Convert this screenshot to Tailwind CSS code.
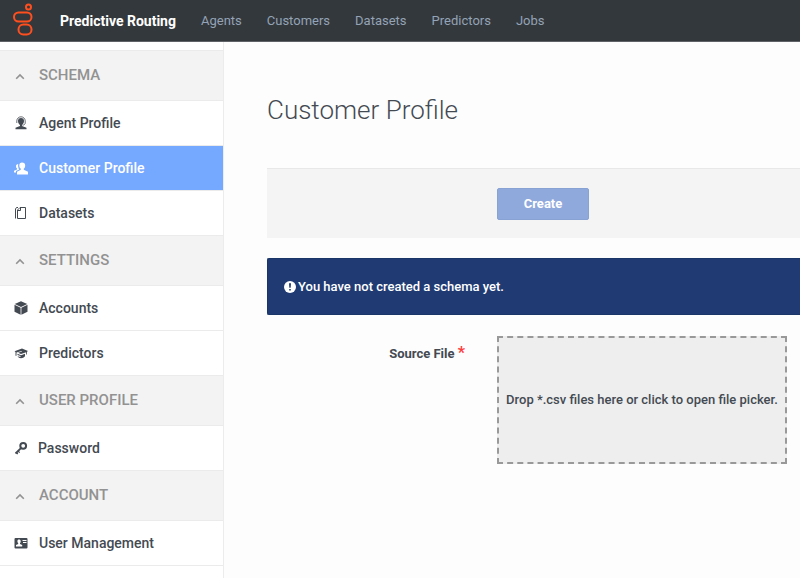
<!DOCTYPE html>
<html lang="en">
<head>
<meta charset="UTF-8" />
<meta name="viewport" content="width=device-width, initial-scale=1.0"/>
<title>Customer Profile - Predictive Routing</title>
<script src="https://cdn.jsdelivr.net/npm/@tailwindcss/browser@4"></script>
</head>
<body class="min-h-screen flex flex-col overflow-x-hidden bg-[#fdfdfd] text-[#444a52] font-['Roboto',sans-serif]">

<!-- Top bar -->
<header class="h-[42px] shrink-0 flex items-center bg-[#33383d] border-b border-[#5f6367]">
  <a href="#" class="w-[60px] pl-3" aria-label="Home">
    <svg class="w-6 h-9" viewBox="0 0 24 36" fill="none" stroke="#ff4f1f" stroke-width="2">
      <circle cx="16.500" cy="4" r="2.500"/>
      <rect x="2" y="9.500" width="17.500" height="9" rx="4.500"/>
      <rect x="6.500" y="21.500" width="13" height="10" rx="4.800"/>
    </svg>
  </a>
  <a href="#" class="text-sm font-bold text-white">Predictive Routing</a>
  <nav class="ml-[25px] flex gap-[25px] text-[13px] text-[#94a3b5]">
    <a href="#">Agents</a>
    <a href="#">Customers</a>
    <a href="#">Datasets</a>
    <a href="#">Predictors</a>
    <a href="#">Jobs</a>
  </nav>
</header>

<div class="flex flex-1">
  <!-- Sidebar -->
  <aside class="w-[224px] shrink-0 pt-2 bg-white border-r border-[#ececec] text-sm font-medium">
    <button class="w-full h-[51px] px-[15px] flex items-center gap-[14px] bg-[#f3f3f3] border-y border-[#ebebeb] text-[15px] text-[#929292]">
      <svg class="size-[10px]" viewBox="0 0 10 10" fill="none" stroke="currentColor" stroke-width="1.600"><path d="M1.200 7.800L5 4l3.800 3.800"/></svg>
      SCHEMA
    </button>
    <a href="#" class="h-[45px] px-[14px] flex items-center gap-[11px] border-b border-[#ebebeb]">
      <svg class="size-[14px]" viewBox="0 0 14 14" fill="currentColor">
        <path d="M7 2a3 3 0 0 0-3 3c0 1.700.8 3.300 2 4v1L1.500 11.800v1.500h11v-1.500L8 10V9c1.200-.7 2-2.300 2-4a3 3 0 0 0-3-3z"/>
        <path d="M2.800 7V5a4.200 4.200 0 0 1 8.400 0v2c0 1.300-1 2-2.700 2.200" fill="none" stroke="currentColor" stroke-width=".8"/>
      </svg>
      Agent Profile
    </a>
    <a href="#" class="h-[45px] px-[14px] flex items-center gap-[11px] border-b border-[#ebebeb] bg-[#75a8ff] text-white">
      <svg class="size-[14px]" viewBox="0 0 14 14" fill="currentColor">
        <path d="M8 1.500c-1.700 0-2.700 1.200-2.700 2.900 0 1.500.6 2.600 1.500 3.200v1.200L3 10.800V13.500h11v-2.700L9.800 8.800V7.600c.8-.6 1.400-1.700 1.400-3.200 0-1.700-1.100-2.900-3.200-2.900z"/>
        <path d="M4.200 3C2.800 3 2 4 2 5.200c0 1.100.4 1.900 1 2.400v.9L0 9.800V11.500h2V10l3.200-1.500C4.600 7.500 4.100 6.200 4.100 4.500z"/>
      </svg>
      Customer Profile
    </a>
    <a href="#" class="h-11 px-[14px] flex items-center gap-[11px]">
      <svg class="size-[14px]" viewBox="0 0 14 14" fill="none" stroke="currentColor" stroke-width="1">
        <path d="M6 1.500h5.500v11h-8V4z"/>
        <path d="M3.500 4.500h3V1.500M4 1.500H2.500L1.500 3v9.500"/>
      </svg>
      Datasets
    </a>

    <button class="w-full h-[51px] px-[15px] flex items-center gap-[14px] bg-[#f3f3f3] border-y border-[#ebebeb] text-[15px] text-[#929292]">
      <svg class="size-[10px]" viewBox="0 0 10 10" fill="none" stroke="currentColor" stroke-width="1.600"><path d="M1.200 7.800L5 4l3.800 3.800"/></svg>
      SETTINGS
    </button>
    <a href="#" class="h-[45px] px-[14px] flex items-center gap-[11px] border-b border-[#ebebeb]">
      <svg class="size-[14px]" viewBox="0 0 14 14" fill="currentColor">
        <path d="M7 .3L13.300 3 7 5.900.7 3z"/>
        <path d="M.5 3.800l6.100 2.900v7L.5 10.700z"/>
        <path d="M13.500 3.800L7.400 6.700v7l6.100-3z"/>
      </svg>
      Accounts
    </a>
    <a href="#" class="h-11 px-[14px] flex items-center gap-[11px]">
      <svg class="size-[14px]" viewBox="0 0 14 14" fill="currentColor">
        <path d="M8 2.500L14 5l-1 .7v2.800h-.8V6.200L7 8 4 6.800l4-1.300-.3-.6L2.500 6.500v3.300h-1V6L.5 5.300z"/>
        <path d="M3.500 7.700L7 9.200l4-1.500v2.600C10 11.600 8.600 12.200 7 12.200S4.300 11.500 3.500 10.300l3 .6v-.8l-3-1z"/>
      </svg>
      Predictors
    </a>

    <button class="w-full h-[51px] px-[15px] flex items-center gap-[14px] bg-[#f3f3f3] border-y border-[#ebebeb] text-[15px] text-[#929292]">
      <svg class="size-[10px]" viewBox="0 0 10 10" fill="none" stroke="currentColor" stroke-width="1.600"><path d="M1.200 7.800L5 4l3.800 3.800"/></svg>
      USER PROFILE
    </button>
    <a href="#" class="h-11 px-[14px] flex items-center gap-[10px]">
      <svg class="size-[14px]" viewBox="0 0 14 14" fill="none" stroke="currentColor">
        <circle cx="9.200" cy="4.800" r="2.900" stroke-width="2"/>
        <path d="M7.200 6.800L1.500 12.500" stroke-width="1.800"/>
        <path d="M4 10l1.700 1.700M2.300 11.500l1.500 1.500" stroke-width="1.200"/>
      </svg>
      Password
    </a>

    <button class="w-full h-[51px] px-[15px] flex items-center gap-[14px] bg-[#f3f3f3] border-y border-[#ebebeb] text-[15px] text-[#929292]">
      <svg class="size-[10px]" viewBox="0 0 10 10" fill="none" stroke="currentColor" stroke-width="1.600"><path d="M1.200 7.800L5 4l3.800 3.800"/></svg>
      ACCOUNT
    </button>
    <a href="#" class="h-[45px] px-[14px] flex items-center gap-[11px] border-b border-[#ebebeb]">
      <svg class="size-[14px]" viewBox="0 0 14 14">
        <rect x=".5" y="2" width="13" height="10.500" rx="1" fill="currentColor"/>
        <path d="M5 3.500c-1 0-1.600.7-1.600 1.700S4 7 4.200 7.300v.7L2 9v1.500h6.200V9L6 8v-.7c.4-.4.7-1.100.7-2.100S6 3.500 5 3.500zM8.500 4h4v1h-4zM9 6h3.500v1H9z" fill="#fff"/>
      </svg>
      User Management
    </a>
  </aside>

  <!-- Content -->
  <main class="flex-1 min-w-0 pl-[43px] pt-12">
    <h1 class="text-[26px] leading-10 font-light">Customer Profile</h1>

    <div class="mt-[38px] h-[70px] pl-[230px] flex items-center bg-[#f4f4f4] border-t border-[#e8e8e8]">
      <button class="w-[92px] h-8 rounded-xs bg-[#8fa9dd] border border-[#88a2d4] text-[13px] font-bold text-white">Create</button>
    </div>

    <div role="alert" class="mt-5 h-[57px] pl-4 flex items-center gap-[2px] rounded-l-xs bg-[#203b73] border border-r-0 border-[#1a3568] text-[13px] font-medium text-white">
      <svg class="size-3" viewBox="0 0 12 12">
        <circle cx="6" cy="6" r="6" fill="#fff"/>
        <path d="M5 2.200h2l-.3 4.600H5.300zM5.200 7.900h1.600v1.600H5.200z" fill="#203b73"/>
      </svg>
      You have not created a schema yet.
    </div>

    <form class="mt-[21px] flex gap-8">
      <label for="source-file" class="w-[198px] shrink-0 pt-2 text-right text-[13px] leading-5 font-bold">Source File <span class="text-base leading-4 text-[#ff3b3b]">*</span></label>
      <label class="w-[290px] h-32 shrink-0 flex items-center justify-center bg-[#eee] border-2 border-dashed border-[#999] text-[13px] font-medium whitespace-nowrap cursor-pointer">
        Drop *.csv files here or click to open file picker.
        <input id="source-file" type="file" accept=".csv" class="sr-only">
      </label>
    </form>
  </main>
</div>

</body>
</html>
